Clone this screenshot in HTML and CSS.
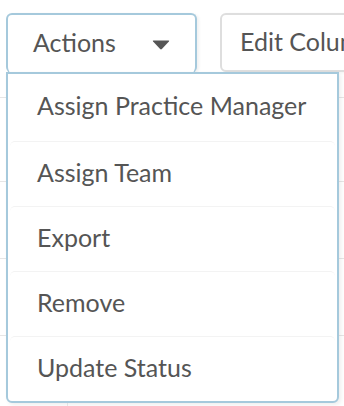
FILE: index.html
```html
<!DOCTYPE html>
<html lang="en">
<head>
    <meta charset="UTF-8">
    <meta name="viewport" content="width=device-width, initial-scale=1.0">
    <title>Actions Menu</title>
    <link rel="stylesheet" href="styles.css">
</head>
<body>
    <div class="toolbar">
        <!-- Actions dropdown (open) -->
        <div class="dropdown">
            <button class="btn btn-actions">
                <span>Actions</span>
                <svg class="caret" width="18" height="10" viewBox="0 0 18 10">
                    <path d="M1.5 0.5 H16.5 Q17.8 0.5 16.9 1.6 L9.9 9.1 Q9 10 8.1 9.1 L1.1 1.6 Q0.2 0.5 1.5 0.5 Z" fill="#555"/>
                </svg>
            </button>
            <ul class="menu">
                <li>Assign Practice Manager</li>
                <li>Assign Team</li>
                <li>Export</li>
                <li>Remove</li>
                <li>Update Status</li>
            </ul>
        </div>
        <button class="btn btn-edit">Edit Columns</button>
    </div>

    <!-- Table behind the menu -->
    <div class="table">
        <div class="row row-head"></div>
        <div class="row"></div>
        <div class="row"></div>
        <div class="row row-last"><div class="cell"></div></div>
    </div>
</body>
</html>
```

FILE: styles.css
```css
body {
    margin: 0;
    padding: 0;
    background: #fff;
    font-family: Lato, "Open Sans", sans-serif;
    color: #555;
    overflow: hidden;
}
.toolbar {
    display: flex;
    gap: 23px;
    padding: 13px 0 0 6px;
    white-space: nowrap;
}
.dropdown {
    position: relative;
}
.btn {
    height: 59px;
    background: #fff;
    font-family: inherit;
    font-size: 25px;
    color: #555;
    border-radius: 6px;
    box-shadow: 2px 1px 3px rgba(0, 0, 0, 0.06);
    cursor: pointer;
}
.btn-actions {
    width: 191px;
    height: 60px;
    display: flex;
    align-items: center;
    justify-content: space-between;
    padding: 0 25px 4px 25px;
    border: 2px solid #a5c9dc;
    border-bottom: none;
}
.caret {
    margin-top: 6px;
}
.btn-edit {
    padding: 0 18px 3px;
    border: 2px solid #dedede;
    flex-shrink: 0;
}
.menu {
    position: absolute;
    top: 59px;
    left: 0;
    width: 333px;
    margin: 0;
    padding: 0;
    list-style: none;
    background: #fff;
    border: 2px solid #a5c9dc;
    border-radius: 0 0 6px 6px;
    box-shadow: 2px 2px 4px rgba(0, 0, 0, 0.07);
    box-sizing: border-box;
    z-index: 2;
}
.menu li {
    height: 65px;
    display: flex;
    align-items: center;
    padding: 0 0 5px 27px;
    box-sizing: border-box;
    margin: 0 2px;
    font-size: 25px;
    border-top: 1px solid #f3f3f3;
    border-radius: 5px;
}
.menu li:first-child {
    border-top: none;
    height: 67px;
}
.table {
    margin-top: 24px;
}
.row {
    height: 76px;
    border-top: 1px solid #e6e6e6;
}
.row-head {
    height: 83px;
}
.row-last .cell {
    width: 67px;
    height: 76px;
    border-right: 1px solid #ececec;
}
```
